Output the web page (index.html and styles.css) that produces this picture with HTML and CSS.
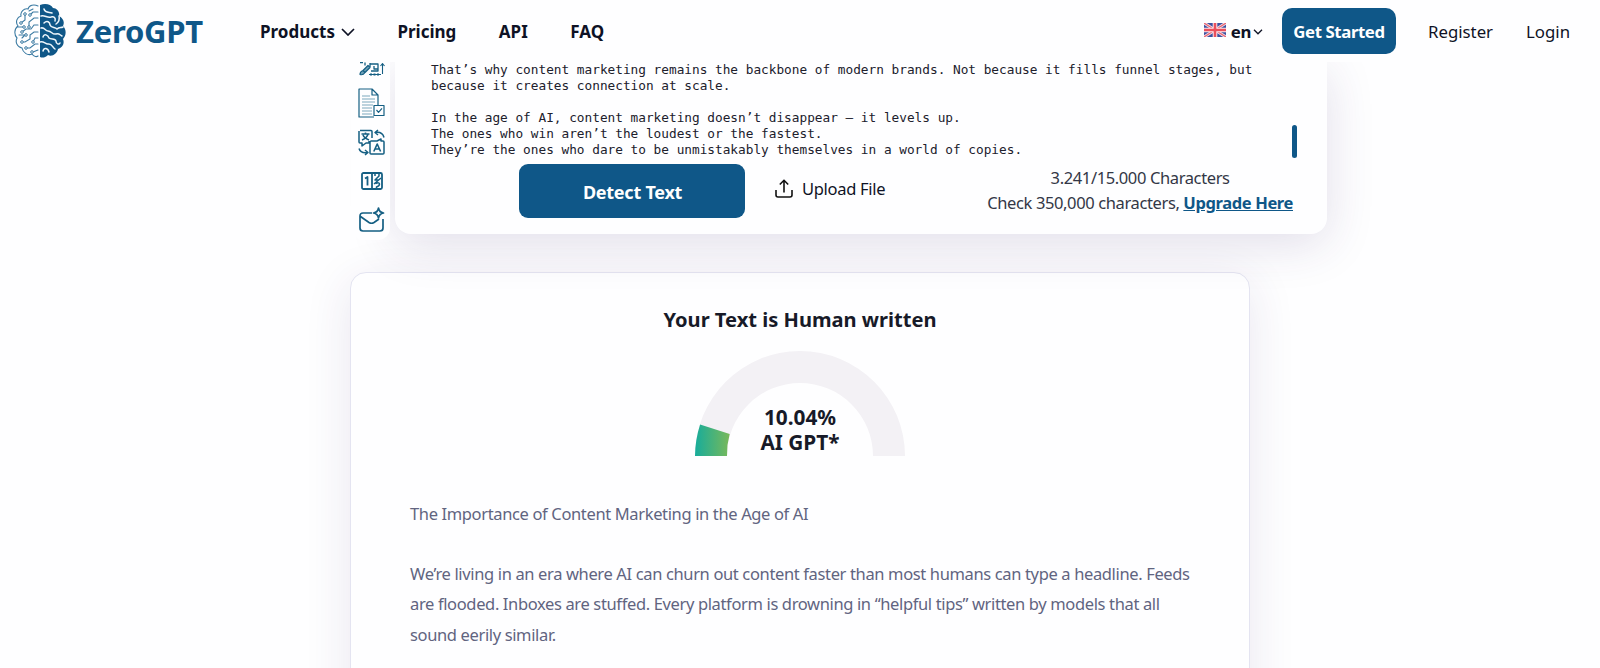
FILE: index.html
```
<!DOCTYPE html>
<html lang="en">
<head>
  <meta charset="UTF-8">
  <meta name="viewport" content="width=device-width, initial-scale=1.0">
  <title>ZeroGPT</title>
  <link rel="stylesheet" href="styles.css">
</head>
<body>

  <header class="header">
    <a class="logo">
      <svg class="brain" viewBox="0 0 52 54" fill="none">
        <!-- left half: circuit lines -->
        <g stroke="#3c7ba3" stroke-width="1.1" stroke-linecap="round">
          <path d="M24 2C20 0 15 1 14 5C10 4 6 8 7 12C3 13 1 18 4 22C0 25 0 31 3 34C1 38 3 43 8 44C9 49 14 52 18 50C20 53 23 53 24 52"/>
          <path d="M24 8H19L16 11M24 14H20L15 18V23M11 10V16L7 19M24 21H20L17 25H12L8 28M4 23H9M24 28H20L16 31V35L11 38H7M24 34H21L19 38M24 40H21L16 44H12M24 46L19 48M12 30L8 34M19 5L15 7M5 31H10"/>
        </g>
        <g fill="#fff" stroke="#3c7ba3" stroke-width="1">
          <circle cx="16" cy="11" r="1.3"/><circle cx="15" cy="23" r="1.3"/><circle cx="10" cy="23" r="1.3"/><circle cx="7" cy="19" r="1.3"/><circle cx="8" cy="28" r="1.3"/><circle cx="8" cy="38" r="1.3"/><circle cx="19" cy="38" r="1.3"/><circle cx="12" cy="44" r="1.3"/><circle cx="11" cy="10" r="1.3"/><circle cx="12" cy="31" r="1.3"/><circle cx="18" cy="48" r="1.3"/>
        </g>
        <!-- right half: solid with folds -->
        <path fill="#0f5788" d="M26 1C31-1 37 0 39 4C43 4 46 8 45 12C49 14 51 18 49 22C53 26 52 32 49 35C51 40 48 44 44 45C43 50 38 53 34 51C31 54 28 54 26 53Z"/>
        <path stroke="#eef6fb" stroke-width="1.5" stroke-linecap="round" d="M30 5C31 9 35 8 38 9M27 12C31 11 33 14 37 13C40 12 42 14 41 17M45 12C46 16 45 18 42 20M30 19C33 16 36 18 36 21C37 24 41 23 43 25C45 23 47 24 49 23M27 24C31 23 31 27 34 27C38 27 38 31 42 30C45 29 46 31 48 32M29 33C30 29 34 31 35 34C37 36 41 34 42 37C42 40 45 41 46 39M26 38C30 37 31 40 34 40C38 39 38 43 41 45M29 47C30 43 34 44 35 48"/>
      </svg>
      <span class="logo-text">ZeroGPT</span>
    </a>

    <nav class="nav">
      <a class="nav-products">Products
        <svg width="14" height="8" viewBox="0 0 14 8"><path d="M1 1l6 6 6-6"/></svg>
      </a>
      <a class="nav-pricing">Pricing</a>
      <a class="nav-api">API</a>
      <a class="nav-faq">FAQ</a>
    </nav>

    <div class="account">
      <div class="lang">
        <svg class="flag" viewBox="0 0 22 14">
          <rect width="22" height="14" fill="#3c50a0"/>
          <path d="M0 0l22 14M22 0L0 14" stroke="#f3dce6" stroke-width="3"/>
          <path d="M0 0l22 14M22 0L0 14" stroke="#e8636f" stroke-width="1.2"/>
          <path d="M11 0v14M0 7h22" stroke="#fbe8ee" stroke-width="4.6"/>
          <path d="M11 0v14M0 7h22" stroke="#ea4f5c" stroke-width="2.6"/>
        </svg>
        <span class="lang-text">en</span>
        <svg class="lang-arrow" width="10" height="6" viewBox="0 0 10 6"><path d="M1 .8l4 4 4-4"/></svg>
      </div>
      <a class="get-started">Get Started</a>
      <a class="register">Register</a>
      <a class="login">Login</a>
    </div>
  </header>

  <main class="main">
    <section class="detector">
      <aside class="tools">
        <svg class="tool tool-paraphrase" width="27" height="15" viewBox="0 0 27 15">
          <path d="M2 .5h3M7 .5v3M12 1v4M12 2h8v7h-7M16 4v3h4" stroke-width="1.3"/>
          <path d="M2 12.500q0-3 3-4l5-5 2 2-5 5q-2 3-5 2zM5 8.500l2 2" fill="#6d9fb6"/>
          <path d="M24.500 12V2M22.500 4l2-2.500 2 2.500M11 12.500h12" stroke-width="1.100"/>
          <path d="M12 12.500h10" stroke-width="2.200" stroke-dasharray="2 1.500"/>
        </svg>
        <svg class="tool tool-doc" width="27" height="31" viewBox="0 0 27 31">
          <path d="M16 29H1V1h13l6 6v10M14 1v6h6"/>
          <path d="M4 8h8M4 11h13M4 14h13M4 17h11M4 20h10M4 23h10M4 26h10" stroke="#6d9fb6" stroke-width=".9"/>
          <path d="M16 17.500h10v10H16zM18.500 22l2 2.300 3.500-4"/>
        </svg>
        <svg class="tool tool-translate" width="27" height="27" viewBox="0 0 27 27">
          <path d="M2 1.500h11q1 0 1 1V9M1 2v11q0 1 1 1h2v3l4-3h3V12M12 14v10q0 1 1 1h12q1 0 1-1V13q0-1-1-1h-2v-2l-4 2h-6q-1 0-1 2" stroke-width="1.500"/>
          <path d="M3.500 5h8M7.500 3.500V5M10 5q-1 4-6 6M5 6q1 3 6 5M15.800 22.500l3.400-7.500 3.400 7.500M17 20h4.500" stroke-width="1.600"/>
          <path d="M20 1l-3 2.500 3 2.500M17.500 3.500q7-1 8.500 5M7 26l3-2.500L7 21M9.500 23.500q-7 1-8.500-4" stroke-width="1.500"/>
        </svg>
        <svg class="tool tool-counter" width="22" height="18" viewBox="0 0 22 18">
          <rect x="1" y="1" width="20" height="16" rx="1.500" stroke-width="1.800"/>
          <path d="M11 1v16M4 6.500L6.500 5v8.500" stroke-width="1.800"/>
          <path d="M14 2v2M18 1v3l-4 4h4M20 6l-7 6M14.500 11.500q4-1.500 4 .5t-3 3v2" stroke-width="1.500"/>
        </svg>
        <svg class="tool tool-mail" width="26" height="25" viewBox="0 0 26 25">
          <path d="M13 6H4Q1 6 1 9v12q0 3 3 3h17q3 0 3-3V12M1.500 9.500l8.500 6q2.500 1.500 5 0l5-3.500" stroke-width="1.700"/>
          <path d="M19.500 1q.7 4.300 5 5-4.300.7-5 5-.7-4.300-5-5 4.300-.7 5-5z" stroke-width="1.700"/>
        </svg>
      </aside>

      <div class="editor">
        <div class="editor-body">
          <div class="editor-text">That’s why content marketing remains the backbone of modern brands. Not because it fills funnel stages, but
because it creates connection at scale.

In the age of AI, content marketing doesn’t disappear — it levels up.
The ones who win aren’t the loudest or the fastest.
They’re the ones who dare to be unmistakably themselves in a world of copies.</div>
          <div class="scroll-thumb"></div>
        </div>
        <div class="editor-footer">
          <button class="detect-btn"><span>Detect Text</span></button>
          <div class="upload">
            <svg width="18" height="19" viewBox="0 0 18 19"><path d="M1 11v5q0 2 2 2h12q2 0 2-2v-5M9 13.500V1.500M4.800 5.500L9 1.300l4.200 4.200"/></svg>
            <span class="upload-text">Upload File</span>
          </div>
          <div class="limits">
            <div class="count">3.241/15.000 Characters</div>
            <div class="upgrade"><span class="check">Check 350,000 characters, </span><a>Upgrade Here</a></div>
          </div>
        </div>
      </div>
    </section>

    <section class="result">
      <h2 class="result-title"><span>Your Text is Human written</span></h2>
      <div class="gauge">
        <svg width="210" height="105" viewBox="0 0 210 105">
          <defs>
            <linearGradient id="gaugeFill" gradientUnits="userSpaceOnUse" x1="0" y1="0" x2="36" y2="0">
              <stop offset="0" stop-color="#17ac9b"/>
              <stop offset="1" stop-color="#7cb957"/>
            </linearGradient>
          </defs>
          <path d="M0 105A105 105 0 0 1 210 105H178A73 73 0 0 0 32 105Z" fill="#f3f1f5"/>
          <path d="M0 105A105 105 0 0 1 5.100 73.500L34.700 83A73 73 0 0 0 32 105Z" fill="url(#gaugeFill)"/>
        </svg>
        <div class="gauge-text"><span class="percent">10.04%</span><br><span class="gauge-label">AI GPT*</span></div>
      </div>
      <div class="result-text">
        <p class="line-title">The Importance of Content Marketing in the Age of AI</p>
        <p>We’re living in an era where AI can churn out content faster than most humans can type a headline. Feeds<br>are flooded. Inboxes are stuffed. Every platform is drowning in “helpful tips” written by models that all<br>sound eerily similar.</p>
      </div>
    </section>
  </main>

</body>
</html>
```
FILE: styles.css
```
/* Global styles */
* {
  box-sizing: border-box;
}

body {
  margin: 0;
  height: 668px;
  overflow: hidden;
  background-color: #fefeff;
  color: #0e1225;
  font-family: 'Segoe UI', 'Noto Sans', 'Open Sans', sans-serif;
  font-size: 16.5px;
}

svg {
  display: block;
  flex: none;
}

/* Header */
.header {
  height: 62px;
  display: flex;
  align-items: center;
  padding: 0 30px 0 14px;
  white-space: nowrap;
}

.logo {
  display: flex;
  align-items: center;
  gap: 10px;
  width: 246px;
}

.brain {
  width: 52px;
  height: 54px;
}

.logo-text {
  font-size: 31px;
  line-height: 40px;
  font-weight: 700;
  letter-spacing: -0.25px;
  color: #0f5788;
}

.nav {
  display: flex;
  gap: 42.5px;
  padding-top: 2px;
  font-size: 17px;
  font-weight: 700;
  line-height: 24px;
}

.nav-products {
  display: flex;
  align-items: center;
  gap: 6px;
}

.nav path {
  fill: none;
  stroke: #0e1225;
  stroke-width: 1.7;
}

.account {
  display: flex;
  align-items: center;
  margin-left: auto;
  padding-top: 2px;
  font-size: 16.8px;
  line-height: 24px;
}

.lang {
  display: flex;
  align-items: center;
  font-weight: 700;
  letter-spacing: -0.4px;
}

.flag {
  width: 22px;
  height: 14px;
  margin: -4px 5px 0 0;
}

.lang-arrow {
  margin-left: 2px;
  fill: none;
  stroke: #0e1225;
  stroke-width: 1.3;
}

.get-started {
  width: 114px;
  height: 46px;
  margin: -2px 32px 0 19px;
  padding-top: 12px;
  border-radius: 10px;
  background-color: #0f5788;
  color: #fff;
  font-weight: 700;
  letter-spacing: -0.4px;
  text-align: center;
}

.register {
  margin-right: 33px;
}

/* Detector */
.main {
  height: 606px;
  overflow: hidden;
}

.detector {
  display: flex;
  gap: 5px;
  width: 976px;
  height: 172px;
  margin-left: 351px;
}

.tools {
  position: relative;
  display: flex;
  flex-direction: column;
  align-items: center;
  width: 39px;
  height: 178px;
  padding-left: 2px;
  border-radius: 0 0 12px 12px;
  background-color: #fefeff;
}

.tool {
  fill: none;
  stroke: #155f83;
  stroke-width: 1.2;
  stroke-linejoin: round;
}

.tool-doc {
  margin-top: 11px;
}

.tool-translate {
  margin-top: 10px;
}

.tool-counter {
  margin-top: 16px;
}

.tool-mail {
  margin-top: 17px;
}

.editor {
  width: 932px;
  border-radius: 0 0 16px 16px;
  background-color: #fefeff;
  box-shadow: 0 10px 48px rgba(60, 40, 110, 0.15);
}

.editor-body {
  display: flex;
  height: 102px;
  padding: 0 30px 0 36px;
}

.editor-text {
  flex: 1;
  white-space: pre;
  font-family: Consolas, 'DejaVu Sans Mono', monospace;
  font-size: 12.75px;
  line-height: 16px;
  color: #20202c;
}

.scroll-thumb {
  width: 5px;
  height: 33px;
  margin-top: 63px;
  border-radius: 3px;
  background-color: #0f5788;
}

.editor-footer {
  display: flex;
  padding: 0 34px 0 124px;
  white-space: nowrap;
}

.detect-btn {
  width: 226px;
  height: 54px;
  padding: 2px 0 0 1px;
  border: none;
  border-radius: 9px;
  background-color: #0f5788;
  color: #fff;
  font-family: inherit;
  font-size: 18px;
  font-weight: 700;
  letter-spacing: -0.25px;
}

.upload {
  display: flex;
  gap: 9px;
  height: 24px;
  margin: 13px 0 0 30px;
}

.upload svg {
  margin-top: 2px;
  fill: none;
  stroke: #111;
  stroke-width: 1.6;
}

.upload-text {
  line-height: 24px;
  letter-spacing: -0.3px;
}

.limits {
  margin: 1px 0 0 auto;
  line-height: 25px;
  letter-spacing: -0.38px;
  text-align: center;
  color: #333746;
}

.upgrade a {
  color: #0f5788;
  font-weight: 700;
  text-decoration: underline;
}

/* Result card */
.result {
  width: 900px;
  height: 460px;
  margin: 38px 0 0 350px;
  padding-top: 31px;
  border: 1px solid #e4e4f1;
  border-radius: 16px;
  background-color: #fefeff;
  box-shadow: 0 10px 48px rgba(60, 40, 110, 0.11);
}

.result-title {
  margin: 0;
  font-size: 20.1px;
  line-height: 32px;
  font-weight: 700;
  text-align: center;
  color: #171a28;
}

.gauge {
  position: relative;
  width: 210px;
  height: 105px;
  margin: 15px auto 0;
}

/* Value sits over the arc */
.gauge-text {
  position: absolute;
  left: 0;
  right: 0;
  top: 54px;
  font-size: 20.8px;
  line-height: 25px;
  font-weight: 700;
  text-align: center;
  color: #171a28;
}

.result-text {
  padding: 43px 58px 0 59px;
  white-space: nowrap;
  line-height: 30.3px;
  letter-spacing: -0.36px;
  color: #61647f;
}

.result-text p {
  margin: 0 0 29.8px;
}
```
